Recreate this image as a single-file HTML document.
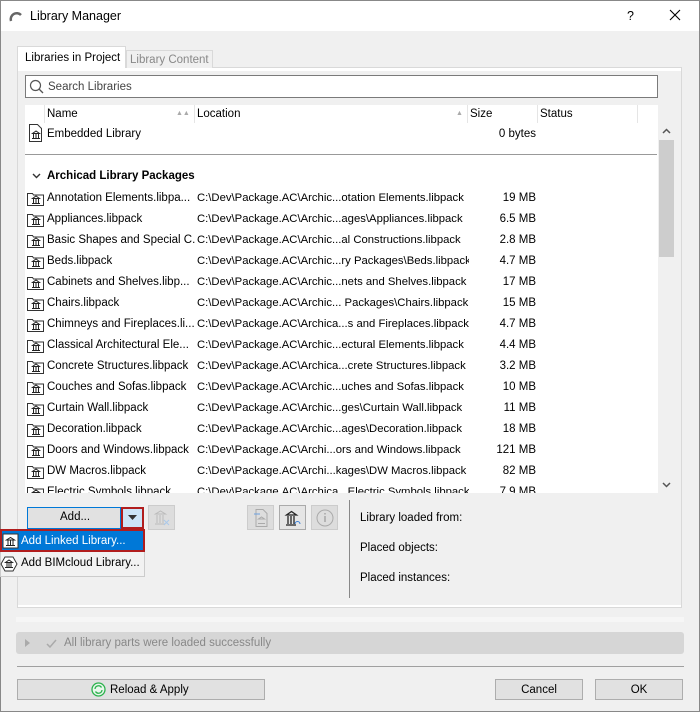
<!DOCTYPE html>
<html><head><meta charset="utf-8"><style>
*{box-sizing:border-box;margin:0;padding:0}
body{width:700px;height:712px;overflow:hidden;font-family:"Liberation Sans",sans-serif;font-size:11.5px;color:#000;background:#f0f0f0;position:relative}
.a{position:absolute;white-space:nowrap}
.row{position:absolute;left:25px;width:633px;height:21px;white-space:nowrap}
.row .n{position:absolute;left:22px;top:6px;width:148px;overflow:hidden}
.row .l{position:absolute;left:172px;top:6px;width:272px;overflow:hidden;font-size:11.3px}
.row .s{position:absolute;left:440px;top:6px;width:71px;text-align:right}
.row svg{position:absolute;left:1px;top:4px}
.btn{position:absolute;background:#e1e1e1;border:1px solid #adadad;text-align:center;white-space:nowrap}
</style></head><body>
<svg width="0" height="0" style="position:absolute"><defs>
<g id="f"><path d="M1.5 3.5h5l1 1.5h10v10.5h-16z" fill="#fff" stroke="#333"/><path d="M6 13.5h8M6.5 8.5h7l-3.5-2.5z M7.5 9v4M10 9v4M12.5 9v4" stroke="#222" fill="none"/></g>
</defs></svg>
<div class="a" style="left:0;top:0;width:700px;height:712px;border:1px solid #888"></div>
<div class="a" style="left:1px;top:1px;width:698px;height:30px;background:#fff"></div>
<svg class="a" style="left:9px;top:9px" width="14" height="14"><path d="M2 12 A6 6 0 0 1 12 6" stroke="#666" stroke-width="2.5" fill="none"/></svg>
<div class="a" style="left:30px;top:9px;font-size:12.5px">Library Manager</div>
<div class="a" style="left:627px;top:9px;font-size:12.5px">?</div>
<svg class="a" style="left:669px;top:9px" width="12" height="12"><path d="M1 1l10 10M11 1L1 11" stroke="#000" stroke-width="1.1"/></svg>
<div class="a" style="left:17px;top:67px;width:665px;height:541px;border:1px solid #d9d9d9;background:#f0f0f0"></div>
<div class="a" style="left:18px;top:605px;width:663px;height:2px;background:#fff"></div>
<div class="a" style="left:17px;top:46px;width:109px;height:23px;background:#fff;border:1px solid #d9d9d9;border-bottom:none"></div>
<div class="a" style="left:25px;top:52px">Libraries in Project</div>
<div class="a" style="left:126px;top:50px;width:87px;height:18px;background:#f0f0f0;border:1px solid #d9d9d9;border-bottom:none"></div>
<div class="a" style="left:130px;top:54px;color:#888">Library Content</div>
<div class="a" style="left:18px;top:68px;width:663px;height:3px;background:#fff"></div>
<div class="a" style="left:25px;top:75px;width:633px;height:23px;background:#fff;border:1px solid #7a7a7a"></div>
<svg class="a" style="left:29px;top:79px" width="15" height="15"><circle cx="6.5" cy="6.5" r="5" stroke="#555" fill="none" stroke-width="1.2"/><path d="M10 10l4 4" stroke="#555" stroke-width="1.3"/></svg>
<div class="a" style="left:48px;top:81px;color:#444">Search Libraries</div>
<div class="a" style="left:25px;top:105px;width:633px;height:18px;background:#fff"></div>
<div class="a" style="left:44px;top:105px;width:1px;height:18px;background:#e5e5e5"></div>
<div class="a" style="left:194px;top:105px;width:1px;height:18px;background:#e5e5e5"></div>
<div class="a" style="left:467px;top:105px;width:1px;height:18px;background:#e5e5e5"></div>
<div class="a" style="left:537px;top:105px;width:1px;height:18px;background:#e5e5e5"></div>
<div class="a" style="left:637px;top:105px;width:1px;height:18px;background:#e5e5e5"></div>
<div class="a" style="left:47px;top:108px">Name</div>
<div class="a" style="left:176px;top:110px;font-size:7px;color:#aaa">▲▲</div>
<div class="a" style="left:197px;top:108px">Location</div>
<div class="a" style="left:456px;top:110px;font-size:7px;color:#aaa">▲</div>
<div class="a" style="left:470px;top:108px">Size</div>
<div class="a" style="left:540px;top:108px">Status</div>
<div class="a" style="left:25px;top:123px;width:633px;height:370px;background:#fff"></div>
<div class="a" style="left:658px;top:123px;width:17px;height:370px;background:#f0f0f0"></div>
<div class="a" style="left:659px;top:140px;width:15px;height:117px;background:#cdcdcd"></div>
<svg class="a" style="left:662px;top:128px" width="9" height="6"><path d="M1 5l3.5-3.5L8 5" stroke="#555" stroke-width="1.5" fill="none"/></svg>
<svg class="a" style="left:662px;top:482px" width="9" height="6"><path d="M1 1l3.5 3.5L8 1" stroke="#555" stroke-width="1.5" fill="none"/></svg>
<div class="a" style="left:25px;top:154px;width:632px;height:1px;background:#999"></div>
<div class="row" style="top:122px"><svg width="20" height="20" style="left:1px;top:1px"><path d="M3.5 1.5h8l4 4v13h-12z" fill="#fff" stroke="#333"/><path d="M6 15.5h8M6.5 10.5h7l-3.5-2.5z M7.5 11v4M10 11v4M12.5 11v4" stroke="#222" fill="none"/></svg><div class="n">Embedded Library</div><div class="s">0 bytes</div></div>
<svg class="a" style="left:32px;top:173px" width="9" height="6"><path d="M1 1l3.5 3.5L8 1" stroke="#333" stroke-width="1.4" fill="none"/></svg>
<div class="a" style="left:47px;top:170px;font-weight:bold">Archicad Library Packages</div>
<div style="position:absolute;left:0;top:0;width:658px;height:493px;overflow:hidden">
<div class="row" style="top:186px"><svg width="20" height="18"><use href="#f"/></svg><div class="n">Annotation Elements.libpa...</div><div class="l">C:\Dev\Package.AC\Archic...otation Elements.libpack</div><div class="s">19 MB</div></div>
<div class="row" style="top:207px"><svg width="20" height="18"><use href="#f"/></svg><div class="n">Appliances.libpack</div><div class="l">C:\Dev\Package.AC\Archic...ages\Appliances.libpack</div><div class="s">6.5 MB</div></div>
<div class="row" style="top:228px"><svg width="20" height="18"><use href="#f"/></svg><div class="n">Basic Shapes and Special C...</div><div class="l">C:\Dev\Package.AC\Archic...al Constructions.libpack</div><div class="s">2.8 MB</div></div>
<div class="row" style="top:249px"><svg width="20" height="18"><use href="#f"/></svg><div class="n">Beds.libpack</div><div class="l">C:\Dev\Package.AC\Archic...ry Packages\Beds.libpack</div><div class="s">4.7 MB</div></div>
<div class="row" style="top:270px"><svg width="20" height="18"><use href="#f"/></svg><div class="n">Cabinets and Shelves.libp...</div><div class="l">C:\Dev\Package.AC\Archic...nets and Shelves.libpack</div><div class="s">17 MB</div></div>
<div class="row" style="top:291px"><svg width="20" height="18"><use href="#f"/></svg><div class="n">Chairs.libpack</div><div class="l">C:\Dev\Package.AC\Archic... Packages\Chairs.libpack</div><div class="s">15 MB</div></div>
<div class="row" style="top:312px"><svg width="20" height="18"><use href="#f"/></svg><div class="n">Chimneys and Fireplaces.li...</div><div class="l">C:\Dev\Package.AC\Archica...s and Fireplaces.libpack</div><div class="s">4.7 MB</div></div>
<div class="row" style="top:333px"><svg width="20" height="18"><use href="#f"/></svg><div class="n">Classical Architectural Ele...</div><div class="l">C:\Dev\Package.AC\Archic...ectural Elements.libpack</div><div class="s">4.4 MB</div></div>
<div class="row" style="top:354px"><svg width="20" height="18"><use href="#f"/></svg><div class="n">Concrete Structures.libpack</div><div class="l">C:\Dev\Package.AC\Archica...crete Structures.libpack</div><div class="s">3.2 MB</div></div>
<div class="row" style="top:375px"><svg width="20" height="18"><use href="#f"/></svg><div class="n">Couches and Sofas.libpack</div><div class="l">C:\Dev\Package.AC\Archic...uches and Sofas.libpack</div><div class="s">10 MB</div></div>
<div class="row" style="top:396px"><svg width="20" height="18"><use href="#f"/></svg><div class="n">Curtain Wall.libpack</div><div class="l">C:\Dev\Package.AC\Archic...ges\Curtain Wall.libpack</div><div class="s">11 MB</div></div>
<div class="row" style="top:417px"><svg width="20" height="18"><use href="#f"/></svg><div class="n">Decoration.libpack</div><div class="l">C:\Dev\Package.AC\Archic...ages\Decoration.libpack</div><div class="s">18 MB</div></div>
<div class="row" style="top:438px"><svg width="20" height="18"><use href="#f"/></svg><div class="n">Doors and Windows.libpack</div><div class="l">C:\Dev\Package.AC\Archi...ors and Windows.libpack</div><div class="s">121 MB</div></div>
<div class="row" style="top:459px"><svg width="20" height="18"><use href="#f"/></svg><div class="n">DW Macros.libpack</div><div class="l">C:\Dev\Package.AC\Archi...kages\DW Macros.libpack</div><div class="s">82 MB</div></div>
<div class="row" style="top:480px"><svg width="20" height="18"><use href="#f"/></svg><div class="n">Electric Symbols.libpack</div><div class="l">C:\Dev\Package.AC\Archica...Electric Symbols.libpack</div><div class="s">7.9 MB</div></div>
</div>
<div class="btn" style="left:27px;top:507px;width:94px;height:22px;border-color:#0078d7"></div>
<div class="a" style="left:60px;top:511px">Add...</div>
<div class="a" style="left:121px;top:507px;width:23px;height:22px;background:#cce4f7;border:2px solid #b11d1d"></div>
<svg class="a" style="left:128px;top:515px" width="9" height="5"><path d="M0 0h9L4.5 5z" fill="#333"/></svg>
<div class="btn" style="left:148px;top:505px;width:27px;height:25px;background:#ddd;border-color:#ccc"></div>
<svg class="a" style="left:153px;top:509px" width="18" height="18"><path d="M2 15h10M2.5 5h10l-5-3z M4 6v8M7 6v8M10 6v8" stroke="#bbb" fill="none"/><path d="M11 11l5 5M16 11l-5 5" stroke="#aac8ea"/></svg>
<div class="btn" style="left:247px;top:505px;width:27px;height:25px;background:#ddd;border-color:#ccc"></div>
<svg class="a" style="left:252px;top:508px" width="18" height="20"><path d="M4 1.5h7l4 4v13h-11z" fill="#ddd" stroke="#aaa"/><path d="M6 15.5h7M6.5 11h6l-3-2z" stroke="#aaa" fill="none"/><path d="M2 6h6" stroke="#6aa0e0"/></svg>
<div class="btn" style="left:279px;top:505px;width:27px;height:25px;background:#e5e5e5;border-color:#aaa"></div>
<svg class="a" style="left:284px;top:509px" width="18" height="18"><path d="M2 16h10M2.5 6h10l-5-3.5z M4 7v8M7 7v8M10 7v8" stroke="#222" fill="none" stroke-width="1.3"/><path d="M11 15a2.5 2.5 0 0 1 5 0" stroke="#3a7fd5" fill="none"/></svg>
<div class="btn" style="left:311px;top:505px;width:27px;height:25px;background:#ddd;border-color:#ccc"></div>
<svg class="a" style="left:315px;top:508px" width="20" height="20"><circle cx="10" cy="10" r="8" stroke="#aaa" fill="none"/><path d="M10 8v6M10 5v1.5" stroke="#aaa" stroke-width="1.6"/></svg>
<div class="a" style="left:349px;top:500px;width:1px;height:98px;background:#888"></div>
<div class="a" style="left:360px;top:512px">Library loaded from:</div>
<div class="a" style="left:360px;top:542px">Placed objects:</div>
<div class="a" style="left:360px;top:572px">Placed instances:</div>
<div class="a" style="left:0;top:529px;width:145px;height:48px;background:#f2f2f2;border:1px solid #ccc"></div>
<div class="a" style="left:0;top:529px;width:145px;height:23px;background:#0078d7;border:2px solid #b11d1d"></div>
<svg class="a" style="left:2px;top:532px" width="18" height="18"><rect x="1" y="2" width="15" height="14" fill="#fff" stroke="#333"/><path d="M4 13.5h9M4.5 8h8l-4-2.5z M6 8.5v4.5M8.5 8.5v4.5M11 8.5v4.5" stroke="#222" fill="none"/></svg>
<div class="a" style="left:21px;top:535px;color:#fff">Add Linked Library...</div>
<svg class="a" style="left:0;top:555px" width="18" height="18"><path d="M5 2h8l4 7-4 7H5L1 9z" fill="#fff" stroke="#333"/><path d="M5 12.5h8M5.5 7.5h7l-3.5-2.5z M7 8v4M9 8v4M11 8v4" stroke="#222" fill="none"/></svg>
<div class="a" style="left:21px;top:557px">Add BIMcloud Library...</div>
<div class="a" style="left:16px;top:617px;width:668px;height:5px;background:#f6f6f6"></div>
<div class="a" style="left:16px;top:632px;width:668px;height:22px;background:#d6d6d6;border-radius:3px"></div>
<svg class="a" style="left:25px;top:639px" width="5" height="8"><path d="M0 0l5 4-5 4z" fill="#aaa"/></svg>
<svg class="a" style="left:46px;top:639px" width="11" height="9"><path d="M1 5l3 3 6-7" stroke="#aaa" stroke-width="1.5" fill="none"/></svg>
<div class="a" style="left:64px;top:637px;color:#888">All library parts were loaded successfully</div>
<div class="a" style="left:17px;top:666px;width:667px;height:1px;background:#a0a0a0"></div>
<div class="btn" style="left:17px;top:679px;width:248px;height:21px"></div>
<svg class="a" style="left:91px;top:682px" width="15" height="15"><circle cx="7.5" cy="7.5" r="6.5" fill="#e9f7ec" stroke="#2bb24c" stroke-width="1.3"/><path d="M4 7a3.5 3.5 0 0 1 6.5-1.5M11 8a3.5 3.5 0 0 1-6.5 1.5" stroke="#2bb24c" fill="none" stroke-width="1.3"/></svg>
<div class="a" style="left:110px;top:684px">Reload &amp; Apply</div>
<div class="btn" style="left:495px;top:679px;width:88px;height:21px;padding-top:4px">Cancel</div>
<div class="btn" style="left:595px;top:679px;width:88px;height:21px;padding-top:4px">OK</div>
</body></html>
